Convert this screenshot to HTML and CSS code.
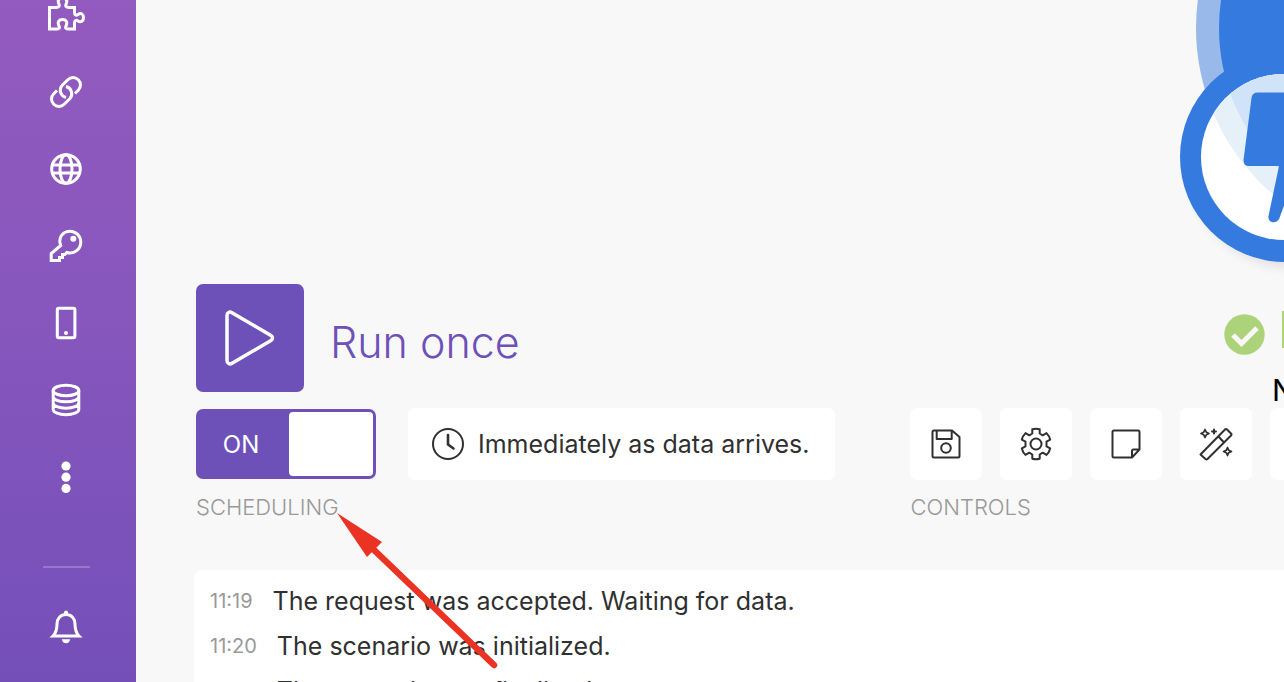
FILE: index.html
```
<!DOCTYPE html>
<html lang="en">
  <head>
    <meta charset="UTF-8" />
    <meta name="viewport" content="width=device-width, initial-scale=1.0" />
    <title>Scenario</title>
    <link rel="stylesheet" href="styles.css">
  </head>

  <body>
    <nav class="sidebar">
      <ul class="nav-list">
        <li>
          <a href="#" aria-label="Apps">
            <svg width="38" height="34" viewBox="0 0 38 34">
              <path d="M2.500 9.500H9c3 0 4-1.500 2.800-3.800C10 2 12.500 0 15.500 0s5.500 2 3.700 5.700C18 8 19 9.500 22 9.500h5.500v5c0 2.500 1.500 3.300 3.500 2 3-2 5.500-.5 5.500 3s-2.500 5.500-5.500 3.500c-2-1.500-3.500-.5-3.500 2v6H21.500c-2.500 0-3.500-1-2.500-3 2-4 0-6.500-3.500-6.500s-5.500 2.500-3.500 6.500c1 2 0 3-2.500 3h-7z" />
            </svg>
          </a>
        </li>
        <li>
          <a href="#" aria-label="Webhooks">
            <svg width="34" height="34" viewBox="0 0 34 34">
              <path d="M26 18.500l3.300-3.300A7.400 7.400 0 0 0 18.800 4.700L13.300 10.200A7.400 7.400 0 0 0 17 22.500M8 15.500l-3.300 3.300A7.400 7.400 0 0 0 15.200 29.300L20.700 23.800A7.400 7.400 0 0 0 17 11.500" />
            </svg>
          </a>
        </li>
        <li>
          <a href="#" aria-label="Templates">
            <svg width="34" height="34" viewBox="0 0 34 34">
              <circle cx="17" cy="17" r="14.300" />
              <ellipse cx="17" cy="17" rx="6" ry="14.300" />
              <path d="M3.500 13h27M3.500 21h27" />
            </svg>
          </a>
        </li>
        <li>
          <a href="#" aria-label="Keys">
            <svg width="34" height="34" viewBox="0 0 34 34">
              <path d="M11.700 16.500C8.500 8 14.500 2.200 21 2.200c6 0 10.800 4.800 10.800 10.800 0 7-6.300 12.500-14 10.500l-2 2h-2.300v3h-3v3H2.200v-7z" />
              <circle class="filled" cx="24.300" cy="9.700" r="3" />
            </svg>
          </a>
        </li>
        <li>
          <a href="#" aria-label="Devices">
            <svg width="34" height="34" viewBox="0 0 34 34">
              <rect x="8.300" y="2.200" width="17.600" height="29.600" rx="1.500" />
              <circle class="filled" cx="17" cy="27" r="2" />
            </svg>
          </a>
        </li>
        <li>
          <a href="#" aria-label="Data stores">
            <svg width="34" height="34" viewBox="0 0 34 34">
              <ellipse cx="17" cy="7.500" rx="12.800" ry="5.300" />
              <path d="M4.200 7.500v19c0 2.900 5.700 5.300 12.800 5.300s12.800-2.400 12.800-5.300v-19M4.200 13.800c0 2.900 5.700 5 12.800 5s12.800-2.100 12.800-5M4.200 20c0 2.900 5.700 5.200 12.800 5.200s12.800-2.300 12.800-5.200" />
            </svg>
          </a>
        </li>
        <li>
          <a href="#" aria-label="More">
            <svg width="34" height="34" viewBox="0 0 34 34">
              <g class="filled">
                <circle cx="17" cy="6" r="4.600" />
                <circle cx="17" cy="17.200" r="4.600" />
                <circle cx="17" cy="28.400" r="4.600" />
              </g>
            </svg>
          </a>
        </li>
      </ul>
      <hr class="nav-divider" />
      <a href="#" aria-label="Notifications">
        <svg width="34" height="34" viewBox="0 0 34 34">
          <path d="M17 4.500c-5.500 0-9 4-9 9.500 0 7-1.500 9.500-4 12h26c-2.500-2.500-4-5-4-12 0-5.500-3.500-9.500-9-9.500z" />
          <path class="filled" d="M15 4.500V2.500a2 2 0 0 1 4 0v2zM12.800 29.200h8.400c-.5 2.500-2 4-4.200 4s-3.700-1.500-4.200-4z" />
        </svg>
      </a>
    </nav>

    <main class="scenario">
      <!-- modules on the diagram -->
      <svg class="module" width="120" height="280" viewBox="0 0 120 280">
        <defs>
          <filter id="shadow" x="-20%" y="-20%" width="140%" height="140%">
            <feGaussianBlur stdDeviation="6" />
          </filter>
          <clipPath id="top"><path d="M0 0h120v120H0z" /></clipPath>
          <clipPath id="inner"><circle cx="120" cy="157" r="83" /></clipPath>
        </defs>
        <g clip-path="url(#top)">
          <circle cx="250" cy="28" r="218" fill="#99b9ea" />
          <circle cx="250" cy="28" r="195" fill="#357bdf" />
        </g>
        <circle cx="128" cy="165" r="102" fill="#000" opacity=".1" filter="url(#shadow)" />
        <circle cx="121" cy="157" r="105" fill="#357bdf" />
        <circle cx="120" cy="157" r="83" fill="#fff" />
        <g clip-path="url(#inner)">
          <circle cx="250" cy="28" r="218" fill="#e5f0f9" />
          <circle cx="250" cy="28" r="195" fill="#d1e3f8" />
        </g>
        <path d="M94 92.500h30V195l-8.500 23c-2 6-12 6-11-2L115 166H85q-5.500 0-5.500-6L87.500 98q.5-5.500 6.500-5.500z" fill="#357bdf" />
      </svg>
      <div class="module-status">
        <svg width="41" height="41" viewBox="0 0 41 41">
          <circle cx="20.500" cy="20.500" r="20.200" fill="#add37a" />
          <path d="M9 21l8.500 8.500L33 14" fill="none" stroke="#f8f8f8" stroke-width="5" />
        </svg>
        <span class="module-count"></span>
      </div>
      <div class="module-name">N</div>

      <section class="toolbar">
        <button class="run-button" type="button">
          <span class="run-icon">
            <svg width="50" height="56" viewBox="0 0 50 56">
              <path d="M2 5.500v45c0 3 2.500 4.300 5 2.800L46 30.500c2-1.200 2-3.800 0-5L7 2.700C4.500 1.200 2 2.500 2 5.500z" />
            </svg>
          </span>
          <span class="run-label">Run once</span>
        </button>

        <div class="groups">
          <div class="group">
            <div class="scheduling">
              <label class="toggle">
                <span class="toggle-text">ON</span>
                <input class="toggle-knob" type="checkbox" checked />
              </label>
              <button class="schedule" type="button">
                <svg width="34" height="34" viewBox="0 0 34 34">
                  <circle cx="17" cy="17" r="15" />
                  <path d="M17 8v9.500l5.500 4" stroke-width="2.600" />
                </svg>
                Immediately as data arrives.
              </button>
            </div>
            <div class="group-title">SCHEDULING</div>
          </div>

          <div class="group">
            <div class="controls">
              <button class="control" type="button" aria-label="Save">
                <svg width="34" height="34" viewBox="0 0 34 34">
                  <path d="M5 3.500h18l7.500 6.500v19q0 1.500-1.500 1.500H5q-1.500 0-1.500-1.500V5Q3.500 3.500 5 3.500zM7.700 4v8h15V4" />
                  <circle cx="17" cy="21" r="4.800" />
                </svg>
              </button>
              <button class="control" type="button" aria-label="Settings">
                <svg width="34" height="34" viewBox="0 0 34 34">
                  <path d="M13.300 2.300q3.700-1 7.400 0v4.200l3 1.800 3.800-2.200q2.700 2.700 3.700 6.500l-3.700 2v4.800l3.700 2q-1 3.800-3.700 6.500l-3.800-2.200-3 1.800v4.200q-3.700 1-7.400 0v-4.200l-3-1.800-3.800 2.200q-2.700-2.700-3.700-6.500l3.700-2v-4.800l-3.700-2q1-3.800 3.700-6.500l3.800 2.200 3-1.800z" />
                  <circle cx="17" cy="17" r="5.500" />
                </svg>
              </button>
              <button class="control" type="button" aria-label="Notes">
                <svg width="34" height="34" viewBox="0 0 34 34">
                  <path d="M5 3.500h24q1.500 0 1.500 1.500v17.500L23 30.500H5q-1.500 0-1.500-1.500V5Q3.500 3.500 5 3.500zM30.500 22.500h-6q-1.500 0-1.500 1.500v6.500" />
                </svg>
              </button>
              <button class="control" type="button" aria-label="Auto-align">
                <svg width="34" height="34" viewBox="0 0 34 34">
                  <path d="M1.500 27.500L26 2.500q1-1 2 0l4 4q1 1 0 2L8.500 32q-1 1-2 0l-5-4.500M19.500 9.500l5 5.500" />
                  <path d="M6 2.500l1.300 2.700L10 6.500 7.300 7.800 6 10.500 4.700 7.800 2 6.500l2.700-1.300zM28.500 20.500l1.200 2.800 2.800 1.200-2.800 1.200-1.200 2.800-1.200-2.800-2.800-1.200 2.800-1.200z" stroke-width="1.700" />
                  <path d="M15 2.500v4M13 4.500h4" />
                </svg>
              </button>
              <button class="control" type="button" aria-label="More controls"></button>
            </div>
            <div class="group-title">CONTROLS</div>
          </div>
        </div>
      </section>

      <ul class="log">
        <li><time>11:19</time>The request was accepted. Waiting for data.</li>
        <li><time>11:20</time>The scenario was initialized.</li>
        <li><time>11:20</time>The scenario was finalized.</li>
      </ul>

      <svg class="arrow" width="164" height="160" viewBox="0 0 164 160">
        <path d="M36 36l121 116" stroke="#ea3323" stroke-width="6.500" stroke-linecap="round" />
        <path d="M0 0l45 29-15 15z" fill="#ea3323" />
      </svg>
    </main>
  </body>
</html>
```
FILE: styles.css
```
* {
  box-sizing: border-box;
}

body {
  display: flex;
  height: 100vh;
  margin: 0;
  overflow: hidden;
  background: #f8f8f8;
  color: #303030;
  font-family: "Inter", sans-serif;
  font-size: 25px;
}

ul {
  margin: 0;
  padding: 0;
  list-style-type: none;
}

button {
  padding: 0;
  border: none;
  color: inherit;
  font: inherit;
  cursor: pointer;
}

/* sidebar */

.sidebar {
  flex: none;
  width: 136px;
  padding-right: 3px;
  background: linear-gradient(#935abf, #8757bd 45%, #744fb8);
}

.nav-list {
  margin-top: -24px;
}

.sidebar a {
  display: flex;
  align-items: center;
  justify-content: center;
  height: 77px;
  padding-right: 1px;
}

.sidebar svg {
  fill: none;
  stroke: white;
  stroke-width: 3px;
}

.sidebar .filled {
  fill: white;
  stroke: none;
}

.nav-divider {
  width: 47px;
  height: 2px;
  margin: 51px auto 20px;
  border: none;
  background: #9677c9;
}

/* scenario */

.scenario {
  position: relative;
  display: flex;
  flex: 1;
  flex-direction: column;
  justify-content: flex-end;
  min-width: 0;
  overflow: hidden;
}

.module {
  position: absolute;
  top: 0;
  left: 1028px;
}

.module-status {
  position: absolute;
  top: 311px;
  left: 1088px;
  display: flex;
  align-items: flex-start;
  gap: 17px;
}

.module-status svg {
  margin-top: 3px;
}

.module-count {
  width: 40px;
  height: 37px;
  background: #add37a;
}

.module-name {
  position: absolute;
  top: 372px;
  left: 1136px;
  color: black;
  font-size: 30px;
  line-height: 36px;
}

/* toolbar */

.toolbar {
  padding: 0 0 50px 60px;
}

.run-button {
  display: flex;
  align-items: center;
  gap: 26px;
  background: none;
  color: #6d50b8;
  font-size: 43px;
  font-weight: 300;
}

.run-icon {
  display: flex;
  align-items: center;
  justify-content: center;
  width: 108px;
  height: 108px;
  border-radius: 7px;
  background: #6d50b8;
}

.run-icon svg {
  fill: none;
  stroke: white;
  stroke-width: 3.5px;
}

.run-label {
  padding-top: 8px;
}

.groups {
  display: flex;
  gap: 75px;
  margin-top: 16px;
}

.group {
  flex: none;
}

.scheduling {
  display: flex;
  align-items: center;
  gap: 32px;
}

.toggle {
  display: flex;
  align-items: center;
  width: 180px;
  height: 70px;
  padding: 3px;
  border-radius: 7px;
  background: #6d50b8;
  color: white;
  font-size: 24px;
  cursor: pointer;
}

.toggle-text {
  flex: 1;
  padding-right: 6px;
  text-align: center;
}

.toggle-knob {
  width: 84px;
  height: 64px;
  margin: 0;
  border-radius: 4px;
  background: white;
  appearance: none;
}

.schedule {
  display: flex;
  align-items: center;
  gap: 13px;
  height: 72px;
  padding: 0 26px 0 23px;
  border-radius: 7px;
  background: white;
}

.schedule svg,
.control svg {
  fill: none;
  stroke: #303030;
  stroke-width: 2px;
  stroke-linejoin: round;
  stroke-linecap: round;
}

.controls {
  display: flex;
  gap: 18px;
}

.control {
  display: flex;
  align-items: center;
  justify-content: center;
  width: 72px;
  height: 72px;
  border-radius: 7px;
  background: white;
}

.group-title {
  margin-top: 15px;
  color: #999;
  font-size: 22px;
  font-weight: 300;
  line-height: 25px;
}

/* log */

.log {
  flex: none;
  height: 112px;
  margin-left: 58px;
  padding: 9px 16px 0;
  overflow: hidden;
  border-top-left-radius: 8px;
  background: white;
  line-height: 45px;
}

.log time {
  margin-right: 20px;
  color: #999;
  font-size: 20px;
  vertical-align: top;
}

.arrow {
  position: absolute;
  top: 513px;
  left: 201px;
}
```
